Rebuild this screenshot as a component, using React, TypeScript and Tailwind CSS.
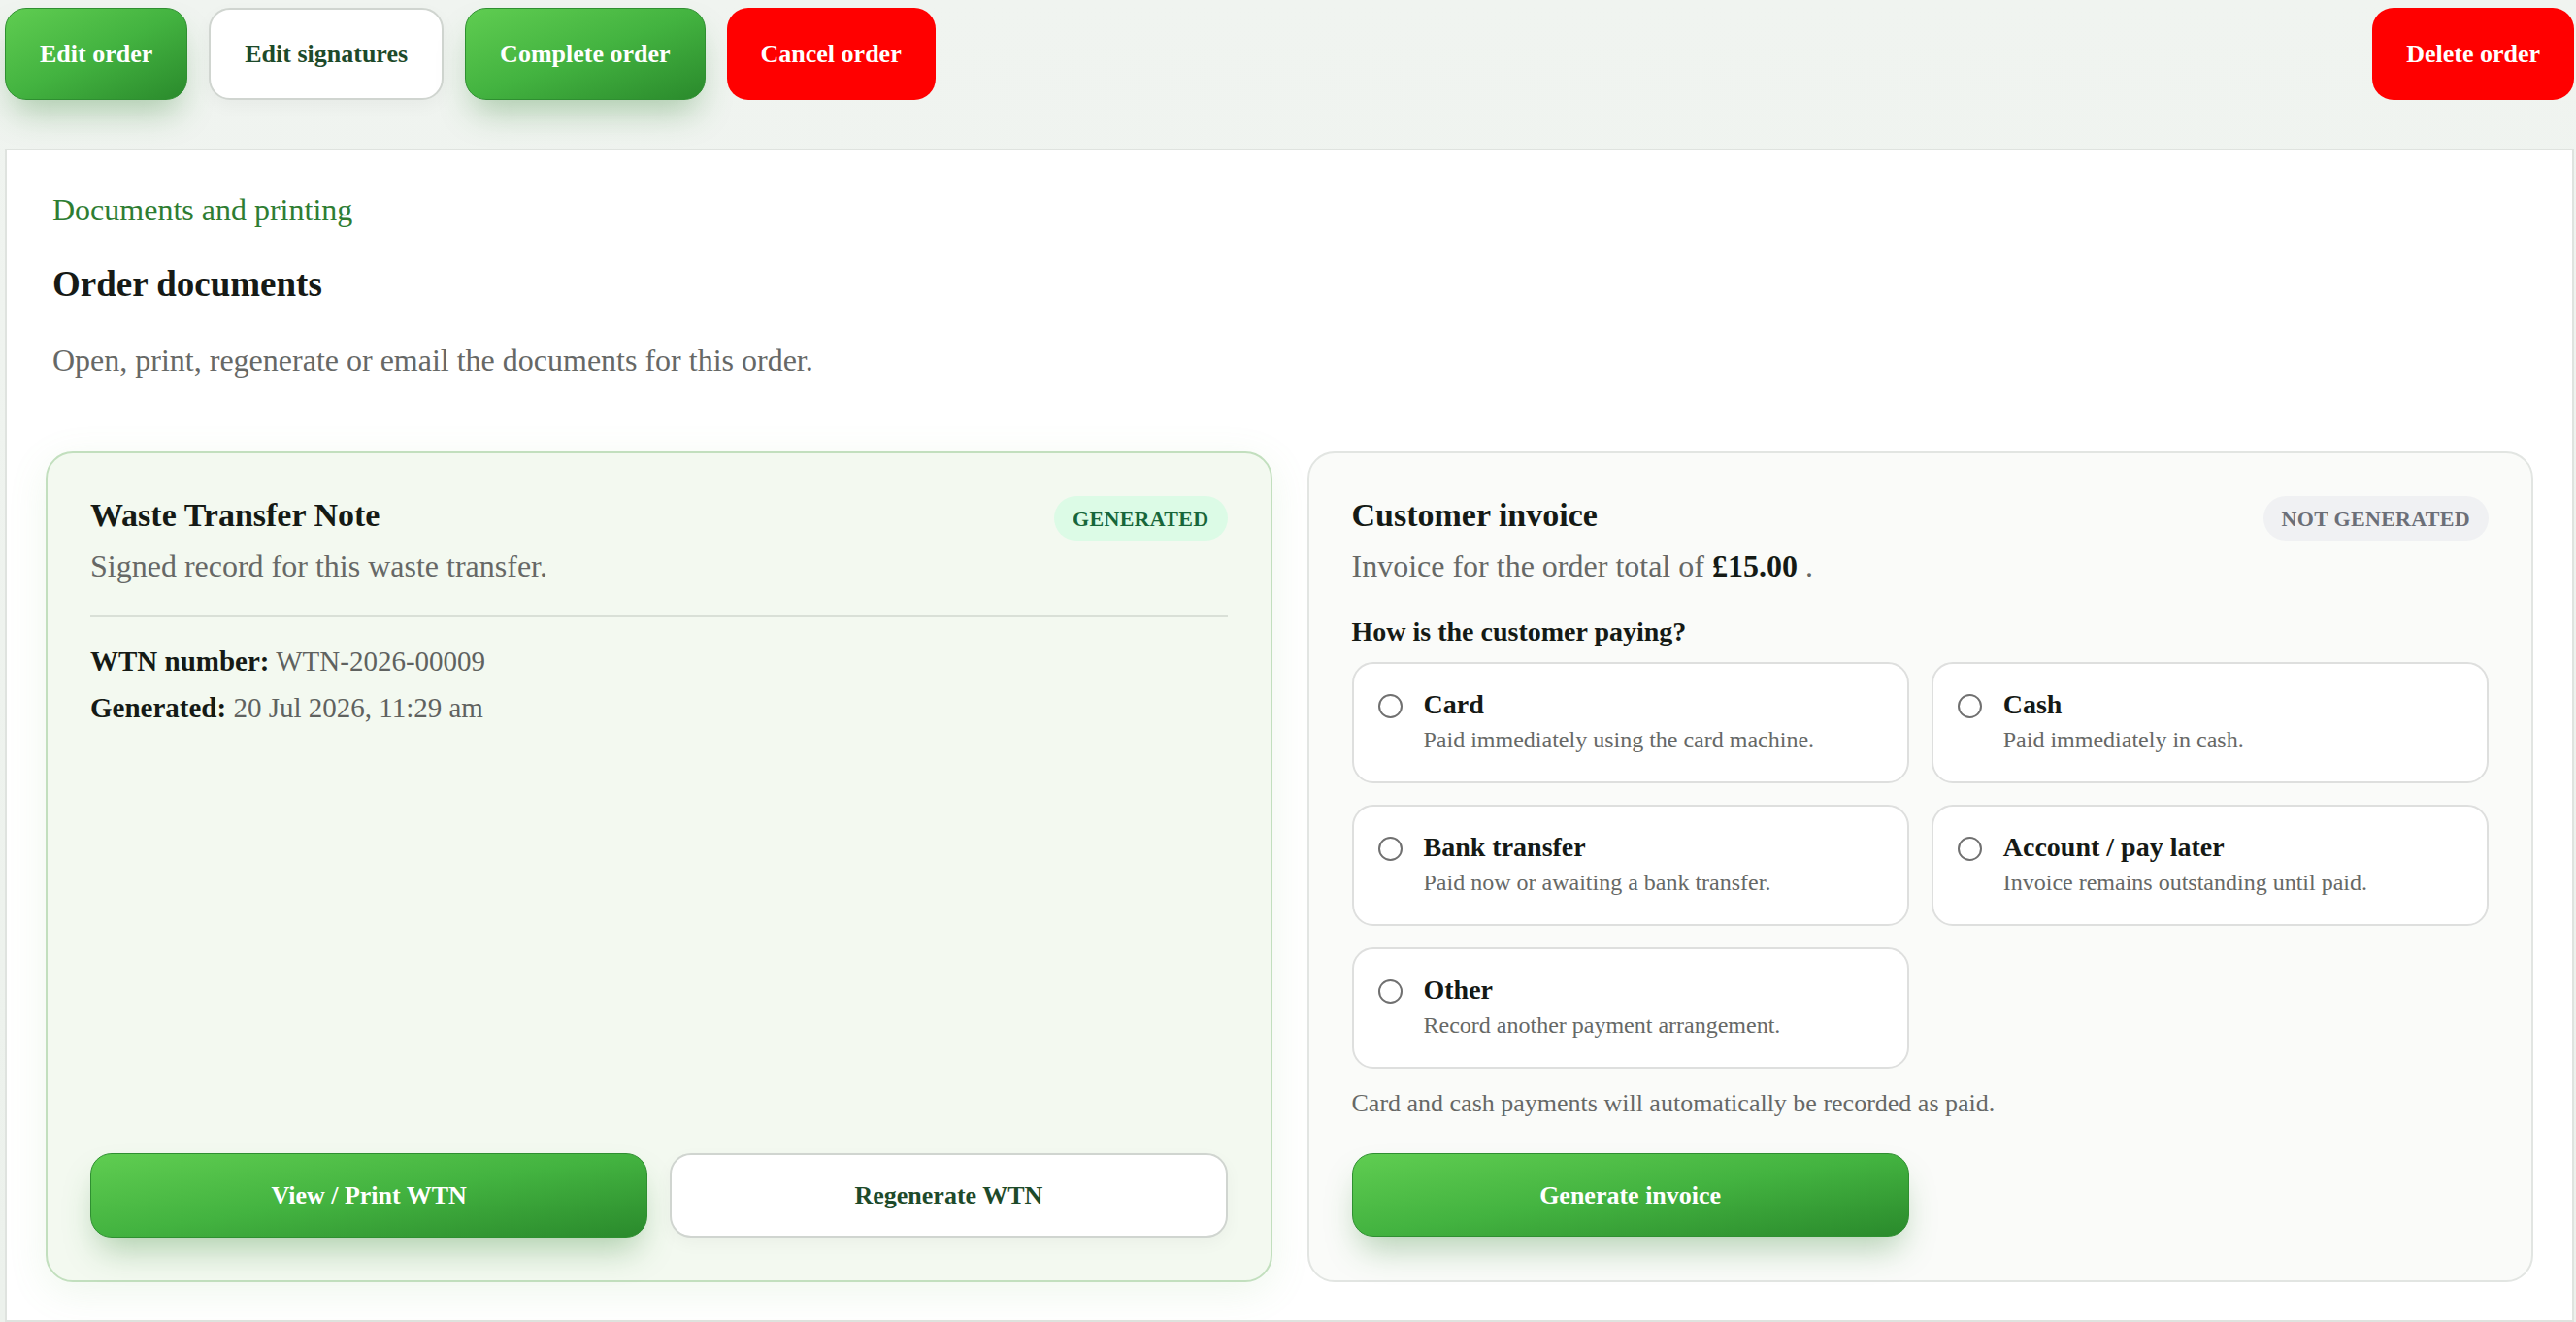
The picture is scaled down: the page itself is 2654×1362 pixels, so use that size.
import type { ReactNode } from 'react';

const greenBtn =
  'border border-[#2f8f31] bg-gradient-to-br from-[#5fcd51] via-[#43b340] to-[#2a8a2c] text-white shadow-[0_20px_34px_-8px_rgba(46,130,46,0.35)]';
const whiteBtn = 'border-2 border-[#d0d5d0] bg-white text-[#1d4a2a] shadow-[0_6px_18px_rgba(0,0,0,0.04)]';
const redBtn = 'bg-[#ff0000] text-white';

function TopButton({ className, children }: { className: string; children: ReactNode }) {
  return (
    <button
      type="button"
      className={`h-[95px] shrink-0 rounded-[22px] px-[35px] text-[26px] font-bold leading-[30px] ${className}`}
    >
      {children}
    </button>
  );
}

function StatusPill({ done }: { done: boolean }) {
  return (
    <span
      className={`mt-[1px] flex h-[46px] shrink-0 items-center rounded-full px-[19px] text-[22px] font-bold tracking-[0.3px] ${
        done ? 'bg-[#dcfbe6] text-[#17663a]' : 'bg-[#f0f1f3] text-[#6b6f78]'
      }`}
    >
      {done ? 'GENERATED' : 'NOT GENERATED'}
    </span>
  );
}

const paymentOptions = [
  { id: 'card', label: 'Card', hint: 'Paid immediately using the card machine.' },
  { id: 'cash', label: 'Cash', hint: 'Paid immediately in cash.' },
  { id: 'bank', label: 'Bank transfer', hint: 'Paid now or awaiting a bank transfer.' },
  { id: 'account', label: 'Account / pay later', hint: 'Invoice remains outstanding until paid.' },
  { id: 'other', label: 'Other', hint: 'Record another payment arrangement.' },
];

function PaymentOption({ label, hint }: { label: string; hint: string }) {
  return (
    <label className="flex h-[125px] cursor-pointer gap-[22px] rounded-[22px] border-2 border-[#dedfde] bg-white pl-[25px] pt-[25px]">
      <span className="mt-[6px] h-[25px] w-[25px] shrink-0 rounded-full border-2 border-[#707070] bg-white" />
      <span className="flex flex-col">
        <span className="text-[28px] font-bold leading-[34px] text-[#151915]">{label}</span>
        <span className="mt-[3px] text-[24px] leading-[32px] text-[#666866]">{hint}</span>
      </span>
    </label>
  );
}

export default function App() {
  return (
    <div className="min-h-screen bg-gradient-to-b from-[#f0f4f0] to-[#ecf1ec] pl-[5px] pr-[2px] pt-[8px] font-['Liberation_Serif','Times_New_Roman',serif]">
      <div className="flex items-start gap-[22px]">
        <TopButton className={greenBtn}>Edit order</TopButton>
        <TopButton className={whiteBtn}>Edit signatures</TopButton>
        <TopButton className={greenBtn}>Complete order</TopButton>
        <TopButton className={redBtn}>Cancel order</TopButton>
        <div className="ml-auto">
          <TopButton className={redBtn}>Delete order</TopButton>
        </div>
      </div>

      <section className="mt-[50px] border-2 border-[#dfe3df] bg-white px-[40px] pb-[39px] pt-[41px]">
        <div className="pl-[7px]">
          <p className="text-[32px] leading-[40px] text-[#2e7d32]">Documents and printing</p>
          <h2 className="mt-[35px] text-[37px] font-bold leading-[44px] text-[#161a16]">Order documents</h2>
          <p className="mt-[36px] text-[32px] leading-[40px] text-[#666866]">
            Open, print, regenerate or email the documents for this order.
          </p>
        </div>

        <div className="mt-[74px] grid grid-cols-2 gap-[36px]">
          {/* waste transfer note */}
          <div className="flex flex-col rounded-[28px] border-2 border-[#c2dfbe] bg-[#f3f9f0] px-[44px] pb-[44px] pt-[43px] shadow-[0_10px_40px_rgba(120,190,110,0.12)]">
            <div className="flex items-start justify-between">
              <h3 className="text-[34px] font-bold leading-[42px] text-[#151a15]">Waste Transfer Note</h3>
              <StatusPill done />
            </div>
            <p className="mt-[6px] text-[32px] leading-[40px] text-[#666866]">Signed record for this waste transfer.</p>
            <div className="mt-[31px] border-t-2 border-[#d9e0d7]" />
            <div className="mt-[21px] text-[29px] leading-[48px] text-[#5f625f]">
              <p>
                <span className="font-bold text-[#151a15]">WTN number:</span> WTN-2026-00009
              </p>
              <p>
                <span className="font-bold text-[#151a15]">Generated:</span> 20 Jul 2026, 11:29 am
              </p>
            </div>
            <div className="mt-auto grid grid-cols-2 gap-[23px]">
              <button type="button" className={`h-[87px] rounded-[22px] text-[26px] font-bold ${greenBtn}`}>
                View / Print WTN
              </button>
              <button type="button" className={`h-[87px] rounded-[22px] text-[26px] font-bold ${whiteBtn}`}>
                Regenerate WTN
              </button>
            </div>
          </div>

          {/* customer invoice */}
          <div className="flex flex-col rounded-[28px] border-2 border-[#e2e5e2] bg-[#fafbf9] px-[44px] pb-[45px] pt-[43px]">
            <div className="flex items-start justify-between">
              <h3 className="text-[34px] font-bold leading-[42px] text-[#151a15]">Customer invoice</h3>
              <StatusPill done={false} />
            </div>
            <p className="mt-[6px] text-[32px] leading-[40px] text-[#666866]">
              Invoice for the order total of <span className="font-bold text-[#151a15]">£15.00</span> .
            </p>
            <p className="mt-[30px] text-[28px] font-bold leading-[36px] text-[#151a15]">How is the customer paying?</p>
            <div className="mt-[13px] grid grid-cols-2 gap-x-[23px] gap-y-[22px]">
              {paymentOptions.map((o) => (
                <PaymentOption key={o.id} label={o.label} hint={o.hint} />
              ))}
            </div>
            <p className="mt-[19px] text-[26px] leading-[34px] text-[#666866]">
              Card and cash payments will automatically be recorded as paid.
            </p>
            <div className="mt-[34px] grid grid-cols-2 gap-[23px]">
              <button type="button" className={`h-[86px] rounded-[22px] text-[26px] font-bold ${greenBtn}`}>
                Generate invoice
              </button>
            </div>
          </div>
        </div>
      </section>
    </div>
  );
}
